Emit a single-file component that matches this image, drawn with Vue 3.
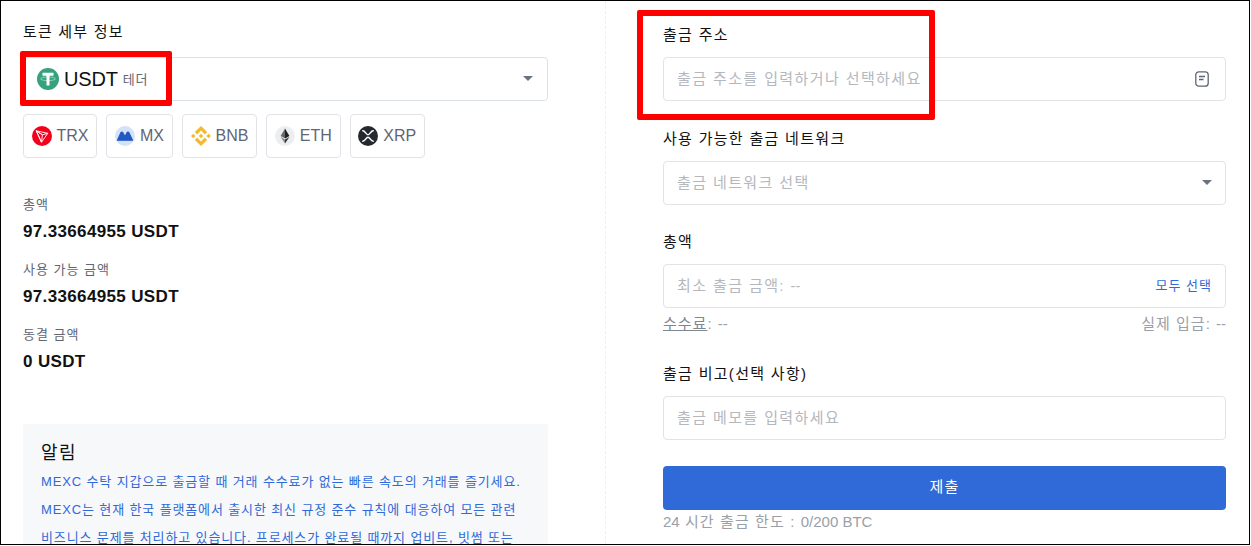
<script setup>
const chips = [
  { name: 'TRX', w: 74 },
  { name: 'MX', w: 67 },
  { name: 'BNB', w: 75 },
  { name: 'ETH', w: 74.5 },
  { name: 'XRP', w: 75.5 },
]
const stats = [
  { label: '총액', value: '97.33664955 USDT' },
  { label: '사용 가능 금액', value: '97.33664955 USDT' },
  { label: '동결 금액', value: '0 USDT' },
]
</script>

<template>
  <div class="page">
    <section class="left">
      <h3 class="title">토큰 세부 정보</h3>
      <div class="token-select">
        <svg class="usdt" viewBox="0 0 22 22">
          <circle cx="11" cy="11" r="11" fill="#35a17f" />
          <ellipse cx="11" cy="10.800" rx="7.500" ry="1.800" fill="none" stroke="#a8dac9" stroke-width=".8" />
          <path d="M5.500 4.800h11v3h-4V17.500H9.500V7.800h-4z" fill="#fff" />
        </svg>
        <span class="sym">USDT</span>
        <span class="full">테더</span>
        <i class="caret"></i>
      </div>
      <div class="chips">
        <div v-for="c in chips" :key="c.name" class="chip" :style="{ width: c.w + 'px' }">
          <svg v-if="c.name === 'TRX'" class="ico" viewBox="0 0 20 20">
            <circle cx="10" cy="10" r="10" fill="#f5001c" />
            <path d="M4.200 4.800 15.800 7.300 9.500 16.200zM4.200 4.800l5.300 11.400.9-7.400zM10.400 8.800l5.400-1.500M10.400 8.800 4.200 4.800" fill="none" stroke="#fff" stroke-width=".9" stroke-linejoin="round" />
          </svg>
          <svg v-else-if="c.name === 'MX'" class="ico" viewBox="0 0 20 20">
            <circle cx="10" cy="10" r="10" fill="#d5e1f7" />
            <path d="M2.500 14.200 6 6.600c.4-.7 1.300-.7 1.700 0l2.300 4.200 2.100-4.200c.4-.7 1.300-.7 1.700 0l3.700 7.600z" fill="#2258c4" stroke="#2258c4" stroke-width="1.200" stroke-linejoin="round" />
          </svg>
          <svg v-else-if="c.name === 'BNB'" class="ico" viewBox="0 0 20 20" fill="#f3ba2f">
            <path d="M6.100 8.400 10 4.500l3.900 3.900 2.300-2.300L10 0 3.800 6.100zM0 10l2.300-2.300L4.600 10l-2.300 2.300zM6.100 11.600 10 15.500l3.900-3.900 2.300 2.300L10 20l-6.200-6.100zM15.400 10l2.300-2.300L20 10l-2.300 2.300zM12.300 10 10 7.700 7.700 10 10 12.300z" />
          </svg>
          <svg v-else-if="c.name === 'ETH'" class="ico" viewBox="0 0 20 20">
            <circle cx="10" cy="10" r="10" fill="#eceef0" />
            <path d="M10 2.500 5.600 10 10 12.600z" fill="#6a6a6a" />
            <path d="M10 2.500 14.400 10 10 12.600z" fill="#222" />
            <path d="M5.600 10.900 10 17.500V13.500z" fill="#8a8a8a" />
            <path d="M14.400 10.900 10 17.500V13.500z" fill="#333" />
          </svg>
          <svg v-else class="ico" viewBox="0 0 20 20">
            <circle cx="10" cy="10" r="10" fill="#23292f" />
            <path d="M4.800 4.800c2.600 0 3 3.900 5.200 3.900s2.600-3.900 5.200-3.900M4.800 15.200c2.600 0 3-3.900 5.200-3.900s2.600 3.900 5.200 3.900" fill="none" stroke="#fff" stroke-width="1.500" stroke-linecap="round" />
          </svg>
          <span>{{ c.name }}</span>
        </div>
      </div>
      <div class="stats">
        <div v-for="s in stats" :key="s.label" class="stat">
          <div class="stat-label">{{ s.label }}</div>
          <div class="stat-value">{{ s.value }}</div>
        </div>
      </div>
      <div class="notice">
        <h4>알림</h4>
        <p>MEXC 수탁 지갑으로 출금할 때 거래 수수료가 없는 빠른 속도의 거래를 즐기세요.</p>
        <p>MEXC는 현재 한국 플랫폼에서 출시한 최신 규정 준수 규칙에 대응하여 모든 관련</p>
        <p>비즈니스 문제를 처리하고 있습니다. 프로세스가 완료될 때까지 업비트, 빗썸 또는</p>
      </div>
    </section>

    <section class="right">
      <label class="label first">출금 주소</label>
      <div class="field">
        <span class="ph">출금 주소를 입력하거나 선택하세요</span>
        <svg class="memo" viewBox="0 0 14 16" fill="none" stroke="#5f6673" stroke-width="1.300">
          <rect x=".8" y=".8" width="12.400" height="14.400" rx="3" />
          <path d="M4 5.500h6M4 8.500h4.500" />
        </svg>
      </div>
      <label class="label second">사용 가능한 출금 네트워크</label>
      <div class="field">
        <span class="ph">출금 네트워크 선택</span>
        <i class="caret"></i>
      </div>
      <label class="label">총액</label>
      <div class="field">
        <span class="ph">최소 출금 금액: <span class="lat">--</span></span>
        <span class="all">모두 선택</span>
      </div>
      <div class="fee-row">
        <span><u>수수료</u>: <span class="lat">--</span></span>
        <span>실제 입금: <span class="lat">--</span></span>
      </div>
      <label class="label memo-label">출금 비고(선택 사항)</label>
      <div class="field">
        <span class="ph">출금 메모를 입력하세요</span>
      </div>
      <button class="submit">제출</button>
      <div class="limit"><span class="lat">24</span> 시간 출금 한도 : <span class="lat">0/200 BTC</span></div>
    </section>

    <div class="mark mark-a"></div>
    <div class="mark mark-b"></div>
  </div>
</template>

<style>
html, body { margin: 0; overflow: hidden; background: #fff; }
</style>

<style scoped>
.page {
  position: relative;
  box-sizing: border-box;
  width: 1250px;
  height: 545px;
  border: 1px solid #000;
  display: flex;
  overflow: hidden;
  background: #fff;
  font-family: "Liberation Sans", "Noto Sans CJK KR", sans-serif;
  color: #111;
}
.left {
  box-sizing: border-box;
  width: 605px;
  height: 100%;
  padding: 21px 57px 0 22px;
  border-right: 1px dashed #eef0f3;
  flex: none;
}
.title {
  margin: 0;
  font-size: 15px;
  font-weight: 400;
  line-height: 20px;
  letter-spacing: 1.2px;
}
.token-select {
  box-sizing: border-box;
  height: 44px;
  margin-top: 15px;
  padding: 0 14px 0 13px;
  border: 1px solid #dde1e8;
  border-radius: 4px;
  display: flex;
  align-items: center;
}
.usdt { width: 22px; height: 22px; flex: none; }
.sym { font-size: 20px; margin-left: 5px; letter-spacing: -.2px; }
.full { font-size: 13px; color: #5f6673; margin-left: 5px; letter-spacing: 1px; padding-bottom: 2px; }
.caret {
  margin-left: auto;
  width: 0;
  height: 0;
  border-left: 5px solid transparent;
  border-right: 5px solid transparent;
  border-top: 5px solid #6b7280;
  margin-bottom: 2px;
}
.chips { display: flex; gap: 9px; margin-top: 13px; }
.chip {
  box-sizing: border-box;
  height: 44px;
  border: 1px solid #e1e3e6;
  border-radius: 4px;
  display: flex;
  align-items: center;
  justify-content: center;
  gap: 5px;
  font-size: 16px;
  color: #5f6673;
}
.ico { width: 20px; height: 20px; flex: none; }
.stats { margin-top: 38px; }
.stat { height: 65px; }
.stat-label { font-size: 13px; line-height: 18px; color: #5f6673; letter-spacing: 1px; }
.stat-value { font-size: 17px; font-weight: 700; line-height: 20px; margin-top: 8px; color: #111; letter-spacing: .35px; }
.notice {
  height: 200px;
  margin-top: 33px;
  padding: 16px 18px;
  background: #f7f8fa;
  border-radius: 2px;
}
.notice h4 { margin: 0 0 2px; font-size: 18px; font-weight: 400; line-height: 26px; letter-spacing: 1.4px; }
.notice p {
  margin: 0;
  font-size: 13px;
  line-height: 28px;
  color: #3069d8;
  white-space: nowrap;
  letter-spacing: .87px;
}
.right { flex: 1; padding: 0 23px 0 57px; min-width: 0; }
.label {
  display: block;
  font-size: 15px;
  line-height: 20px;
  margin-top: 27px;
  margin-bottom: 12px;
  letter-spacing: 1.3px;
}
.label.first { margin-top: 24px; margin-bottom: 12px; }
.label.second { margin-top: 28px; }
.field {
  box-sizing: border-box;
  height: 44px;
  padding: 0 13px;
  border: 1px solid #e1e3e6;
  border-radius: 4px;
  display: flex;
  align-items: center;
  justify-content: space-between;
  font-size: 15px;
  letter-spacing: 1.4px;
}
.ph { color: #b4b8be; padding-bottom: 4px; }
.lat { letter-spacing: 0; }
.memo { width: 14px; height: 16px; margin-right: 3px; }
.all { color: #3069d8; font-size: 13px; letter-spacing: 1px; padding-bottom: 4px; }
.fee-row {
  display: flex;
  justify-content: space-between;
  font-size: 15px;
  line-height: 20px;
  padding-top: 1px;
  margin-top: 5px;
  color: #9aa0a8;
  letter-spacing: 1px;
}
.fee-row u { color: #7f8791; }
.label.memo-label { margin-top: 30px; }
.submit {
  display: block;
  width: 100%;
  height: 44px;
  margin-top: 26px;
  padding-bottom: 6px;
  border: 0;
  border-radius: 4px;
  background: #3069d8;
  color: #fff;
  font: inherit;
  font-size: 15px;
  letter-spacing: 1.2px;
}
.limit { font-size: 15px; line-height: 20px; margin-top: 2px; color: #9aa0a8; letter-spacing: 1.1px; }
.mark {
  position: absolute;
  box-sizing: border-box;
  border: 6px solid #fe0000;
  border-radius: 2px;
  pointer-events: none;
}
.mark-a { left: 19px; top: 50px; width: 152px; height: 55px; }
.mark-b { left: 636px; top: 9px; width: 298px; height: 110px; }
</style>
